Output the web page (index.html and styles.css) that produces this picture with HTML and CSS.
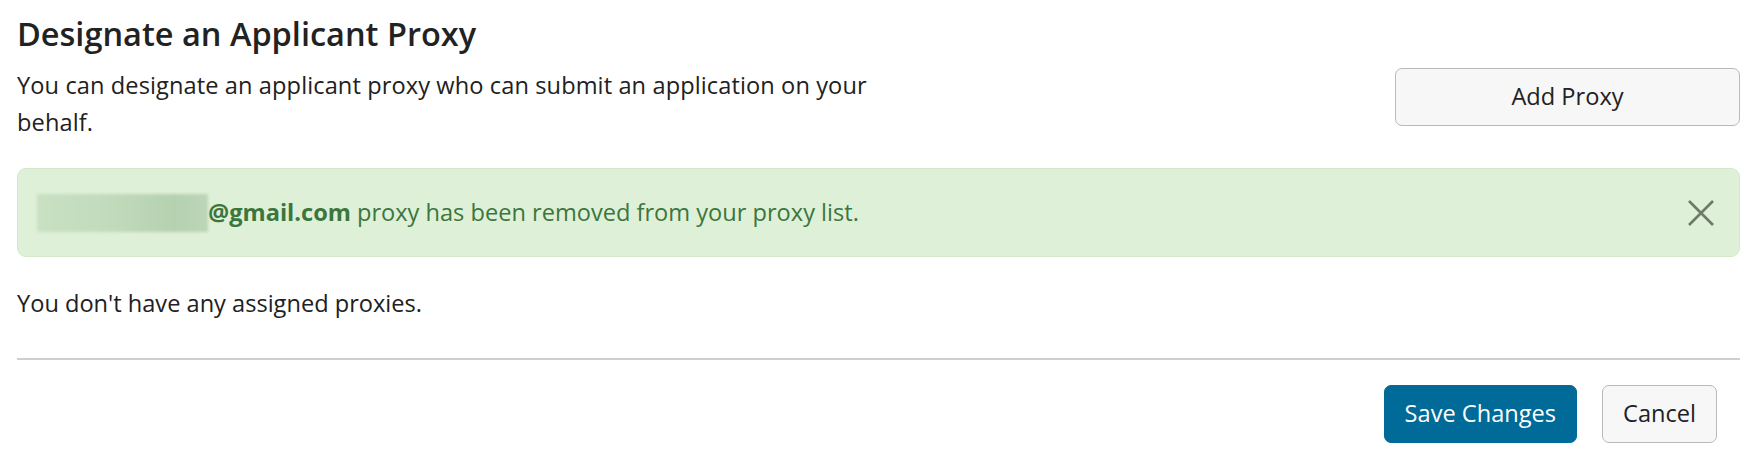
FILE: index.html
```html
<!DOCTYPE html>
<html lang="en">
<head>
<meta charset="utf-8">
<title>Designate an Applicant Proxy</title>
<link rel="stylesheet" href="styles.css">
</head>
<body>
<main class="panel">
  <h2 class="title">Designate an Applicant Proxy</h2>
  <div class="intro">
    <p class="intro-text">You can designate an applicant proxy who can submit an application on your behalf.</p>
    <button class="btn btn-default btn-add" type="button">Add Proxy</button>
  </div>
  <div class="alert" role="alert">
    <p class="alert-text"><span class="redacted"></span><strong>@gmail.com</strong> proxy has been removed from your proxy list.</p>
    <button class="alert-close" type="button" aria-label="Close">
      <svg width="26" height="26" viewBox="0 0 26 26"><path d="M1 1 L25 25 M25 1 L1 25" stroke="#6b7a69" stroke-width="2.6" fill="none"/></svg>
    </button>
  </div>
  <p class="empty">You don't have any assigned proxies.</p>
  <hr class="divider">
  <div class="actions">
    <button class="btn btn-primary" type="button">Save Changes</button>
    <button class="btn btn-default" type="button">Cancel</button>
  </div>
</main>
</body>
</html>
```
FILE: styles.css
```css
* { box-sizing: border-box; }
html, body { margin: 0; background: #fff; }
body {
  font-family: "Open Sans", "Noto Sans", sans-serif;
  font-size: 23.6px;
  line-height: 37px;
  color: #212121;
}
.panel { padding: 14px 12px 0 17px; }
.title {
  margin: 0;
  font-size: 32.5px;
  font-weight: 600;
  line-height: 40px;
  color: #222;
}
.intro {
  display: flex;
  justify-content: space-between;
  align-items: flex-start;
  margin-top: 13px;
}
.intro-text { margin: 0; max-width: 900px; letter-spacing: 0.1px; }
.btn {
  font-family: inherit;
  font-size: 23.6px;
  line-height: 1;
  border-radius: 7px;
  cursor: pointer;
  height: 58px;
  padding: 0 20px;
}
.btn-default {
  background: #f7f7f7;
  border: 1px solid #b9b9b9;
  color: #222;
}
.btn-primary {
  background: #006a98;
  border: 1px solid #006a98;
  color: #fff;
}
.btn-add { width: 345px; margin-top: 1px; }
.alert {
  display: flex;
  align-items: center;
  justify-content: space-between;
  margin-top: 27px;
  height: 89px;
  padding: 0 25px 0 19px;
  background: #dff0d8;
  border: 1px solid #d2e8c8;
  border-radius: 9px;
  color: #3c763d;
}
.alert-text { margin: 0; display: flex; align-items: center; }
.alert-text strong { font-weight: 700; margin-right: 6px; }
.redacted {
  display: inline-block;
  width: 171px;
  height: 38px;
  background: linear-gradient(90deg, #c9e0c3 0%, #c2dbbc 40%, #b5d1b0 80%, #bcd6b7 100%);
  filter: blur(1.5px);
}
.alert-close {
  background: none;
  border: 0;
  padding: 0;
  display: flex;
  cursor: pointer;
}
.empty { margin: 28px 0 0; }
.divider {
  margin: 36px 0 0;
  border: 0;
  border-top: 2px solid #cfcfcf;
}
.actions {
  display: flex;
  justify-content: flex-end;
  gap: 25px;
  margin-top: 25px;
  padding-right: 23px;
}
```
